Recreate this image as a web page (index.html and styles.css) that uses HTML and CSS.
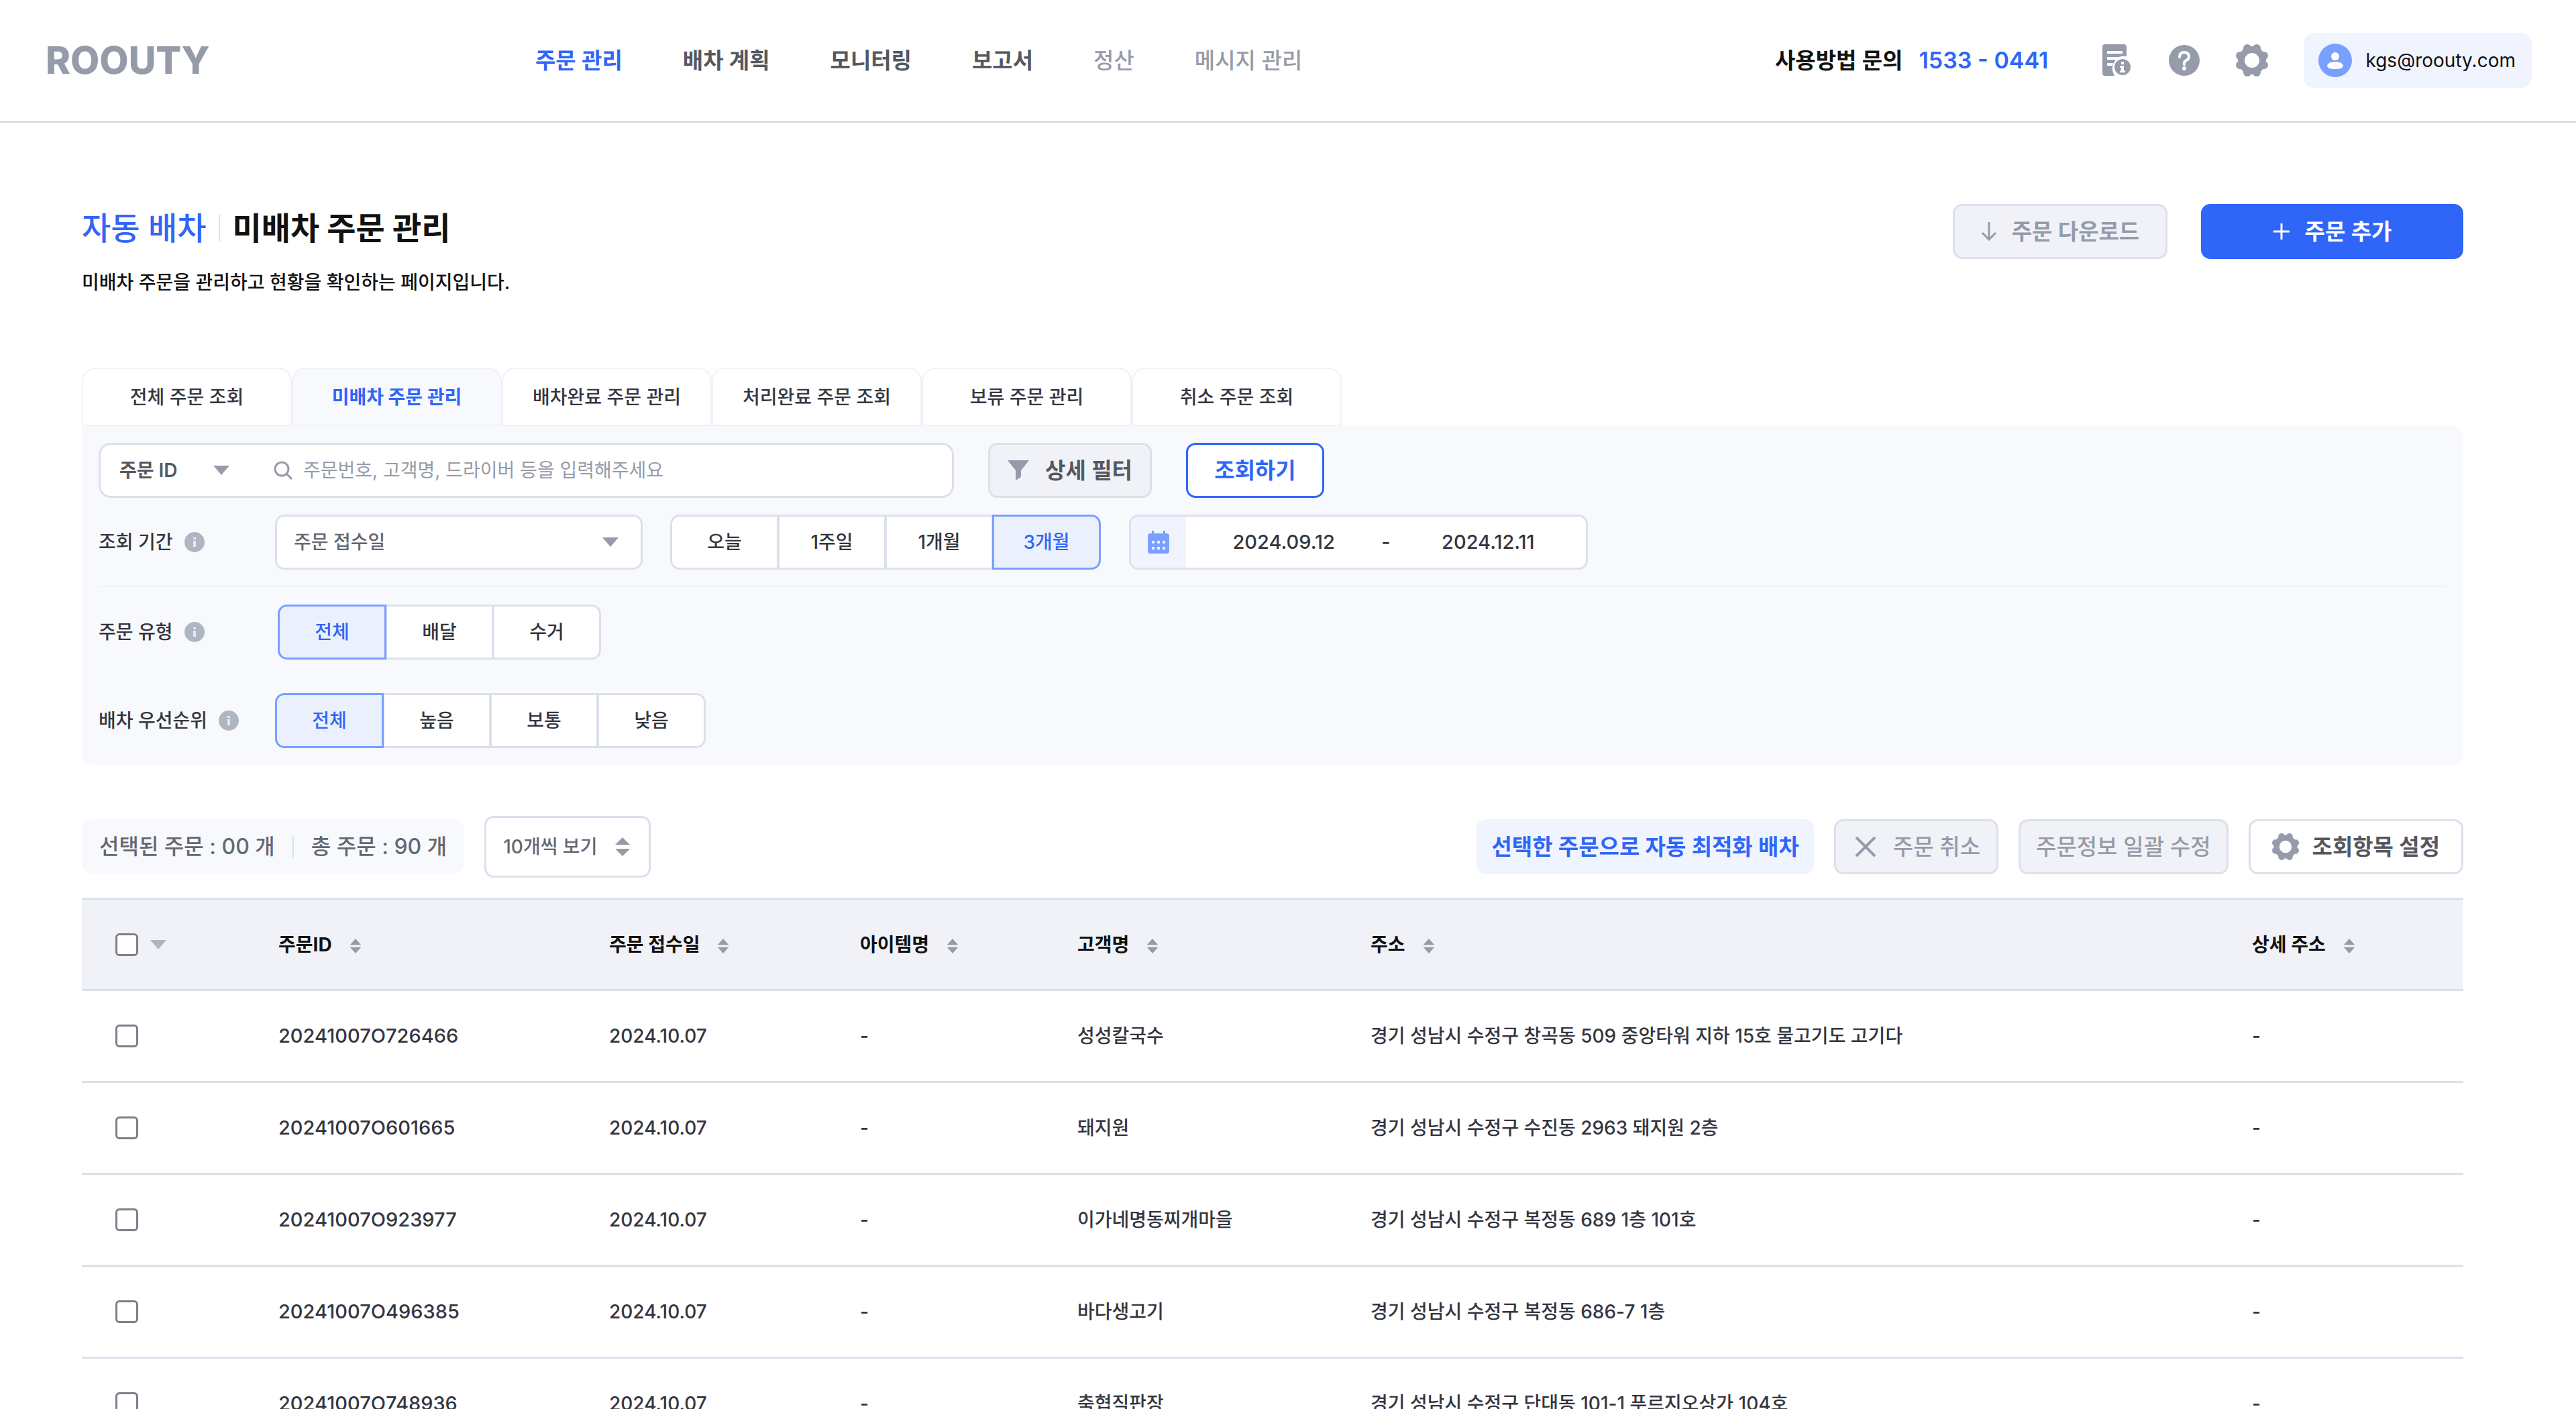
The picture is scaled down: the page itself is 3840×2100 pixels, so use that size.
FILE: index.html
```html
<!DOCTYPE html>
<html lang="ko">
<head>
    <meta charset="UTF-8">
    <meta name="viewport" content="width=device-width, initial-scale=1.0">
    <title>ROOUTY - 미배차 주문 관리</title>
    <link rel="stylesheet" href="styles.css">
</head>
<body>

<!-- Shared icons -->
<svg class="icon-defs" aria-hidden="true">
    <symbol id="icon-gear" viewBox="0 0 48 48">
        <circle cx="24" cy="24" r="16" fill="none" stroke="#959ba9" stroke-width="10"/>
        <circle cx="31" cy="6" r="6"/>
        <circle cx="42" cy="17" r="6"/>
        <circle cx="42" cy="31" r="6"/>
        <circle cx="31" cy="42" r="6"/>
        <circle cx="17" cy="42" r="6"/>
        <circle cx="6" cy="31" r="6"/>
        <circle cx="6" cy="17" r="6"/>
        <circle cx="17" cy="6" r="6"/>
    </symbol>
    <symbol id="icon-info" viewBox="0 0 30 30">
        <circle cx="15" cy="15" r="15"/>
        <path fill="#e4e8f2" d="M13 8h4v3h-4zM13 13h4v9h-4z"/>
    </symbol>
    <symbol id="icon-down" viewBox="0 0 24 14">
        <path d="M0 0H24L12 14Z"/>
    </symbol>
    <symbol id="icon-sort" viewBox="0 0 18 24">
        <path d="M0 10L9 0L18 10ZM0 14H18L9 24Z"/>
    </symbol>
</svg>

<header class="header">
    <a class="logo" href="#">ROOUTY</a>
    <nav class="nav">
        <a class="nav-link active" href="#">주문 관리</a>
        <a class="nav-link" href="#">배차 계획</a>
        <a class="nav-link" href="#">모니터링</a>
        <a class="nav-link" href="#">보고서</a>
        <a class="nav-link muted" href="#">정산</a>
        <a class="nav-link muted" href="#">메시지 관리</a>
    </nav>
    <div class="header-right">
        <span class="contact">사용방법 문의</span>
        <a class="phone" href="tel:15330441">1533 - 0441</a>
        <button class="icon-button" aria-label="공지">
            <svg width="48" height="48" viewBox="0 0 48 48">
                <path d="M7 0H35Q39 0 39 4V18Q28 16 22 24Q14 36 21 47H7Q3 47 3 43V4Q3 0 7 0Z"/>
                <path fill="#fff" d="M10 10H33V14H10ZM10 19H28L24 23H10ZM10 28H19L18 32H10Z"/>
                <circle cx="33" cy="34" r="12"/>
                <path fill="#fff" d="M31 26h4v4h-4zM29 32h6v7h2v3h-8v-3h2v-4h-2z"/>
            </svg>
        </button>
        <button class="icon-button" aria-label="도움말">
            <svg width="48" height="48" viewBox="0 0 48 48">
                <circle cx="24" cy="24" r="23"/>
                <path fill="none" stroke="#fff" stroke-width="4" stroke-linecap="round" d="M17 19Q17 12 24 12T31 19Q31 22 27 24T24 30"/>
                <circle fill="#fff" cx="24" cy="36" r="3"/>
            </svg>
        </button>
        <button class="icon-button" aria-label="설정">
            <svg width="48" height="48"><use href="#icon-gear"/></svg>
        </button>
        <button class="account">
            <svg width="50" height="50" viewBox="0 0 50 50">
                <circle fill="#799fff" cx="25" cy="25" r="25"/>
                <circle fill="#fff" cx="25" cy="19" r="6"/>
                <path fill="#fff" d="M13 33Q14 27 25 27T37 33Q37 38 25 38T13 33Z"/>
            </svg>
            kgs@roouty.com
        </button>
    </div>
</header>

<main class="main">
    <div class="page-head">
        <div>
            <h1 class="title"><span class="title-type">자동 배차</span>미배차 주문 관리</h1>
            <p class="subtitle">미배차 주문을 관리하고 현황을 확인하는 페이지입니다.</p>
        </div>
        <div class="page-actions">
            <button class="btn btn-disabled btn-download">
                <svg width="24" height="28" viewBox="0 0 24 28"><path fill="none" stroke="currentColor" stroke-width="3" d="M12 0V26M2 16L12 26L22 16"/></svg>
                주문 다운로드
            </button>
            <button class="btn btn-primary">
                <svg width="26" height="26" viewBox="0 0 26 26"><path fill="none" stroke="currentColor" stroke-width="3" d="M13 1V25M1 13H25"/></svg>
                주문 추가
            </button>
        </div>
    </div>

    <div class="tabs">
        <button class="tab">전체 주문 조회</button>
        <button class="tab active-tab">미배차 주문 관리</button>
        <button class="tab">배차완료 주문 관리</button>
        <button class="tab">처리완료 주문 조회</button>
        <button class="tab">보류 주문 관리</button>
        <button class="tab">취소 주문 조회</button>
    </div>

    <!-- Search filters -->
    <section class="filters">
        <div class="filter-row search-row">
            <div class="search-box">
                <div class="select search-type">
                    <select aria-label="검색 항목"><option>주문 ID</option></select>
                    <svg width="24" height="14"><use href="#icon-down"/></svg>
                </div>
                <svg class="search-icon" width="28" height="28" viewBox="0 0 28 28"><path fill="none" stroke="currentColor" stroke-width="3" d="M12 2A10 10 0 1 0 12 22A10 10 0 1 0 12 2M19 19L27 27"/></svg>
                <input class="search-input" type="text" aria-label="검색어" placeholder="주문번호, 고객명, 드라이버 등을 입력해주세요">
            </div>
            <button class="btn btn-filter">
                <svg width="32" height="30" viewBox="0 0 32 30"><path d="M0 0H32L20 15V25L12 30V15Z"/></svg>
                상세 필터
            </button>
            <button class="btn btn-outline">조회하기</button>
        </div>

        <div class="filter-row period-row">
            <div class="filter-label">조회 기간 <svg width="30" height="30"><use href="#icon-info"/></svg></div>
            <div class="select period-select">
                <select aria-label="기간 기준"><option>주문 접수일</option></select>
                <svg width="24" height="14"><use href="#icon-down"/></svg>
            </div>
            <div class="segments">
                <label class="segment"><input type="radio" name="period"><span>오늘</span></label>
                <label class="segment"><input type="radio" name="period"><span>1주일</span></label>
                <label class="segment"><input type="radio" name="period"><span>1개월</span></label>
                <label class="segment"><input type="radio" name="period" checked><span>3개월</span></label>
            </div>
            <div class="date-range">
                <button class="calendar" aria-label="달력">
                    <svg width="32" height="34" viewBox="0 0 32 34"><path fill-rule="evenodd" d="M6 0H9V4H23V0H26V4H28Q32 4 32 8V30Q32 34 28 34H4Q0 34 0 30V8Q0 4 4 4H6ZM6 15V19H10V15ZM14 15V19H18V15ZM22 15V19H26V15ZM6 24V28H10V24ZM14 24V28H18V24ZM22 24V28H26V24Z"/></svg>
                </button>
                <input type="text" aria-label="시작일" value="2024.09.12">
                <span>-</span>
                <input type="text" aria-label="종료일" value="2024.12.11">
            </div>
        </div>

        <div class="filter-row type-row">
            <div class="filter-label">주문 유형 <svg width="30" height="30"><use href="#icon-info"/></svg></div>
            <div class="segments">
                <label class="segment"><input type="radio" name="type" checked><span>전체</span></label>
                <label class="segment"><input type="radio" name="type"><span>배달</span></label>
                <label class="segment"><input type="radio" name="type"><span>수거</span></label>
            </div>
        </div>

        <div class="filter-row">
            <div class="filter-label">배차 우선순위 <svg width="30" height="30"><use href="#icon-info"/></svg></div>
            <div class="segments">
                <label class="segment"><input type="radio" name="priority" checked><span>전체</span></label>
                <label class="segment"><input type="radio" name="priority"><span>높음</span></label>
                <label class="segment"><input type="radio" name="priority"><span>보통</span></label>
                <label class="segment"><input type="radio" name="priority"><span>낮음</span></label>
            </div>
        </div>
    </section>

    <!-- Order list -->
    <div class="toolbar">
        <div class="counts">
            <span>선택된 주문 : 00 개</span>
            <span class="count-total">총 주문 : 90 개</span>
        </div>
        <div class="select page-size">
            <select aria-label="페이지 크기"><option>10개씩 보기</option></select>
            <svg width="22" height="28" viewBox="0 0 22 28"><path d="M0 11L11 0L22 11ZM0 17H22L11 28Z"/></svg>
        </div>
        <div class="toolbar-actions">
            <button class="btn btn-soft">선택한 주문으로 자동 최적화 배차</button>
            <button class="btn btn-disabled btn-light btn-cancel">
                <svg width="32" height="32" viewBox="0 0 32 32"><path fill="none" stroke="currentColor" stroke-width="4" d="M2 2L30 30M30 2L2 30"/></svg>
                주문 취소
            </button>
            <button class="btn btn-disabled btn-light">주문정보 일괄 수정</button>
            <button class="btn btn-setting">
                <svg width="40" height="40"><use href="#icon-gear"/></svg>
                조회항목 설정
            </button>
        </div>
    </div>

    <table class="orders">
        <colgroup>
            <col class="col-check">
            <col class="col-id">
            <col class="col-date">
            <col class="col-item">
            <col class="col-customer">
            <col>
            <col class="col-detail">
        </colgroup>
        <thead>
            <tr>
                <th class="check-cell"><input type="checkbox" aria-label="전체 선택"><svg width="24" height="14"><use href="#icon-down"/></svg></th>
                <th>주문ID<svg width="18" height="22"><use href="#icon-sort"/></svg></th>
                <th>주문 접수일<svg width="18" height="22"><use href="#icon-sort"/></svg></th>
                <th>아이템명<svg width="18" height="22"><use href="#icon-sort"/></svg></th>
                <th>고객명<svg width="18" height="22"><use href="#icon-sort"/></svg></th>
                <th>주소<svg width="18" height="22"><use href="#icon-sort"/></svg></th>
                <th>상세 주소<svg width="18" height="22"><use href="#icon-sort"/></svg></th>
            </tr>
        </thead>
        <tbody>
            <tr>
                <td class="check-cell"><input type="checkbox" aria-label="20241007O726466 선택"></td>
                <td class="order-id">20241007O726466</td>
                <td>2024.10.07</td>
                <td>-</td>
                <td>성성칼국수</td>
                <td>경기 성남시 수정구 창곡동 509 중앙타워 지하 15호 물고기도 고기다</td>
                <td>-</td>
            </tr>
            <tr>
                <td class="check-cell"><input type="checkbox" aria-label="20241007O601665 선택"></td>
                <td class="order-id">20241007O601665</td>
                <td>2024.10.07</td>
                <td>-</td>
                <td>돼지원</td>
                <td>경기 성남시 수정구 수진동 2963 돼지원 2층</td>
                <td>-</td>
            </tr>
            <tr>
                <td class="check-cell"><input type="checkbox" aria-label="20241007O923977 선택"></td>
                <td class="order-id">20241007O923977</td>
                <td>2024.10.07</td>
                <td>-</td>
                <td>이가네명동찌개마을</td>
                <td>경기 성남시 수정구 복정동 689 1층 101호</td>
                <td>-</td>
            </tr>
            <tr>
                <td class="check-cell"><input type="checkbox" aria-label="20241007O496385 선택"></td>
                <td class="order-id">20241007O496385</td>
                <td>2024.10.07</td>
                <td>-</td>
                <td>바다생고기</td>
                <td>경기 성남시 수정구 복정동 686-7 1층</td>
                <td>-</td>
            </tr>
            <tr>
                <td class="check-cell"><input type="checkbox" aria-label="20241007O748936 선택"></td>
                <td class="order-id">20241007O748936</td>
                <td>2024.10.07</td>
                <td>-</td>
                <td>축협직판장</td>
                <td>경기 성남시 수정구 단대동 101-1 푸르지오상가 104호</td>
                <td>-</td>
            </tr>
        </tbody>
    </table>
</main>

</body>
</html>
```
FILE: styles.css
```css
/* General reset */
* {
    margin: 0;
    padding: 0;
    box-sizing: border-box;
}

body {
    font-family: Inter, "Noto Sans CJK KR", sans-serif;
    font-size: 28px;
    font-weight: 500;
    line-height: 40px;
    color: #34363f;
    background-color: #fff;
}

button,
input,
select {
    font: inherit;
    color: inherit;
    background: none;
    border: none;
    outline: none;
}

button {
    cursor: pointer;
}

a {
    color: inherit;
    text-decoration: none;
}

svg {
    flex: none;
    fill: #959ba9;
}

.icon-defs {
    position: absolute;
    width: 0;
    height: 0;
}

/* Header */
.header {
    display: flex;
    align-items: center;
    height: 183px;
    padding: 0 66px 0 68px;
    border-bottom: 3px solid #dbe0ec;
}

.logo {
    width: 730px;
    font-size: 56px;
    font-weight: 800;
    color: #959ba9;
}

.nav {
    display: flex;
    gap: 90px;
    font-size: 33px;
    font-weight: 600;
    color: #55585f;
}

.nav-link.active {
    color: #2f66f8;
}

.nav-link.muted {
    font-weight: 500;
    color: #959ba9;
}

.header-right {
    display: flex;
    align-items: center;
    margin-left: auto;
}

.contact {
    font-size: 33px;
    font-weight: 600;
    color: #111;
}

.phone {
    margin: 0 78px 0 24px;
    font-size: 34px;
    font-weight: 600;
    color: #2f66f8;
}

.icon-button {
    display: flex;
    margin-right: 53px;
}

.account {
    display: flex;
    align-items: center;
    gap: 20px;
    height: 82px;
    padding: 0 24px 0 22px;
    font-weight: 400;
    color: #111;
    background-color: #f0f4ff;
    border-radius: 16px;
}

/* Page heading */
.main {
    padding: 121px 168px 0 122px;
}

.page-head {
    display: flex;
    justify-content: space-between;
    height: 244px;
}

.title {
    display: flex;
    align-items: center;
    height: 72px;
    font-size: 47px;
    font-weight: 700;
    line-height: 72px;
    color: #111;
}

.title-type {
    margin-right: 19px;
    padding-right: 18px;
    font-weight: 500;
    line-height: 40px;
    color: #2f66f8;
    border-right: 2px solid #dbe0ec;
}

.subtitle {
    margin-top: 25px;
    color: #111;
}

.page-actions {
    display: flex;
    gap: 50px;
}

/* Buttons */
.btn {
    display: flex;
    align-items: center;
    justify-content: center;
    height: 82px;
    padding: 0 26px;
    font-size: 33px;
    font-weight: 600;
    white-space: nowrap;
    border: 3px solid #dbe0ec;
    border-radius: 14px;
}

.btn-disabled {
    gap: 22px;
    color: #959ba9;
    background-color: #f1f2f8;
}

.btn-light {
    padding: 0 23px;
    font-weight: 500;
}

.btn-cancel {
    gap: 25px;
    padding: 0 24px 0 28px;
}

.btn-download {
    width: 320px;
}

.btn-primary {
    gap: 22px;
    width: 391px;
    color: #fff;
    background-color: #2f66f8;
    border-color: #2f66f8;
}

.btn-filter {
    gap: 24px;
    width: 244px;
    color: #55585f;
    background-color: #f1f2f8;
}

.btn-outline {
    width: 206px;
    color: #2f66f8;
    background-color: #fff;
    border-color: #2f66f8;
}

.btn-soft {
    padding: 0 19px;
    color: #2f66f8;
    background-color: #f0f4ff;
    border-color: #f0f4ff;
}

.btn-setting {
    gap: 20px;
    padding: 0 32px;
    color: #55585f;
    background-color: #fff;
}

/* Tabs */
.tabs {
    display: flex;
}

.tab {
    width: 313px;
    height: 87px;
    font-weight: 500;
    border: 2px solid #f1f2f8;
    border-radius: 20px 20px 0 0;
}

.active-tab {
    font-weight: 700;
    color: #2f66f8;
    background-color: #f8f9fc;
}

/* Filters */
.filters {
    padding: 25px;
    background-color: #f8f9fc;
    border-radius: 0 16px 16px 16px;
}

.filter-row {
    display: flex;
    align-items: center;
}

.filter-label {
    display: flex;
    align-items: center;
    gap: 17px;
    width: 263px;
}

.filter-label svg {
    fill: #b0b5c2;
}

.search-row {
    gap: 51px;
    margin-bottom: 25px;
}

.period-row {
    padding-bottom: 24px;
    border-bottom: 2px solid #f1f2f8;
}

.type-row {
    margin: 26px 0 50px;
}

.type-row .filter-label {
    width: 267px;
}

.search-box {
    display: flex;
    align-items: center;
    width: 1275px;
    height: 82px;
    padding: 0 28px;
    background-color: #fff;
    border: 3px solid #dbe0ec;
    border-radius: 18px;
}

.search-icon {
    margin: 0 16px 0 66px;
    color: #959ba9;
}

.search-input {
    flex: 1;
    height: 60px;
    font-weight: 400;
}

.search-input::placeholder {
    color: #959ba9;
}

.select {
    display: flex;
    align-items: center;
}

.select select {
    flex: 1;
    height: 70px;
    appearance: none;
}

.search-type {
    width: 164px;
    font-weight: 600;
    color: #55585f;
}

.period-select {
    width: 548px;
    height: 82px;
    margin-right: 41px;
    padding: 0 33px 0 25px;
    color: #646873;
    background-color: #fff;
    border: 3px solid #dbe0ec;
    border-radius: 14px;
}

.segments {
    display: flex;
}

.segment {
    width: 162px;
    height: 82px;
    margin-left: -2px;
    cursor: pointer;
}

.segment:first-child {
    margin-left: 0;
}

.segment input {
    position: absolute;
    opacity: 0;
}

.segment span {
    display: flex;
    align-items: center;
    justify-content: center;
    height: 100%;
    background-color: #fff;
    border: 3px solid #dbe0ec;
}

.segment:first-child span {
    border-radius: 14px 0 0 14px;
}

.segment:last-child span {
    border-radius: 0 14px 14px 0;
}

.segment input:checked + span {
    position: relative;
    color: #2f66f8;
    background-color: #ebf0fd;
    border-color: #799fff;
}

.date-range {
    display: flex;
    align-items: center;
    width: 684px;
    height: 82px;
    margin-left: 42px;
    font-size: 29px;
    background-color: #fff;
    border: 3px solid #dbe0ec;
    border-radius: 14px;
    overflow: hidden;
}

.date-range input {
    flex: 1;
    min-width: 0;
    text-align: center;
}

.calendar {
    display: flex;
    align-items: center;
    justify-content: center;
    width: 82px;
    height: 100%;
    background-color: #f0f4ff;
}

.calendar svg {
    fill: #799fff;
}

/* Toolbar */
.toolbar {
    display: flex;
    align-items: center;
    height: 92px;
    margin: 76px 0 30px;
}

.counts {
    display: flex;
    align-items: center;
    height: 82px;
    padding: 0 26px;
    font-size: 32px;
    color: #646873;
    background-color: #f8f9fc;
    border-radius: 16px;
}

.count-total {
    margin-left: 26px;
    padding-left: 26px;
    line-height: 32px;
    border-left: 2px solid #dbe0ec;
}

.page-size {
    width: 248px;
    height: 92px;
    margin-left: 30px;
    padding: 0 28px 0 25px;
    color: #646873;
    border: 3px solid #dbe0ec;
    border-radius: 14px;
}

.toolbar-actions {
    display: flex;
    gap: 30px;
    margin-left: auto;
}

/* Orders table */
.orders {
    width: 100%;
    table-layout: fixed;
    border-spacing: 0;
}

.col-check {
    width: 293px;
}

.col-id {
    width: 493px;
}

.col-date {
    width: 374px;
}

.col-item {
    width: 324px;
}

.col-customer {
    width: 437px;
}

.col-detail {
    width: 315px;
}

.orders th,
.orders td {
    height: 137px;
    text-align: left;
    vertical-align: middle;
    white-space: nowrap;
    border-bottom: 3px solid #dbe0ec;
}

.orders th {
    height: 139px;
    font-weight: 700;
    color: #111;
    background-color: #f1f2f8;
    border-top: 3px solid #dbe0ec;
}

.orders th svg {
    margin-left: 26px;
    vertical-align: middle;
}

.orders .order-id {
    font-size: 29px;
}

.orders .check-cell {
    padding: 0 0 2px 50px;
    line-height: 34px;
}

.orders .check-cell svg {
    margin-left: 18px;
    fill: #b0b5c2;
}

.orders input {
    width: 34px;
    height: 34px;
    vertical-align: middle;
    appearance: none;
    background-color: #fff;
    border: 3px solid #7c7f8a;
    border-radius: 6px;
}
```
